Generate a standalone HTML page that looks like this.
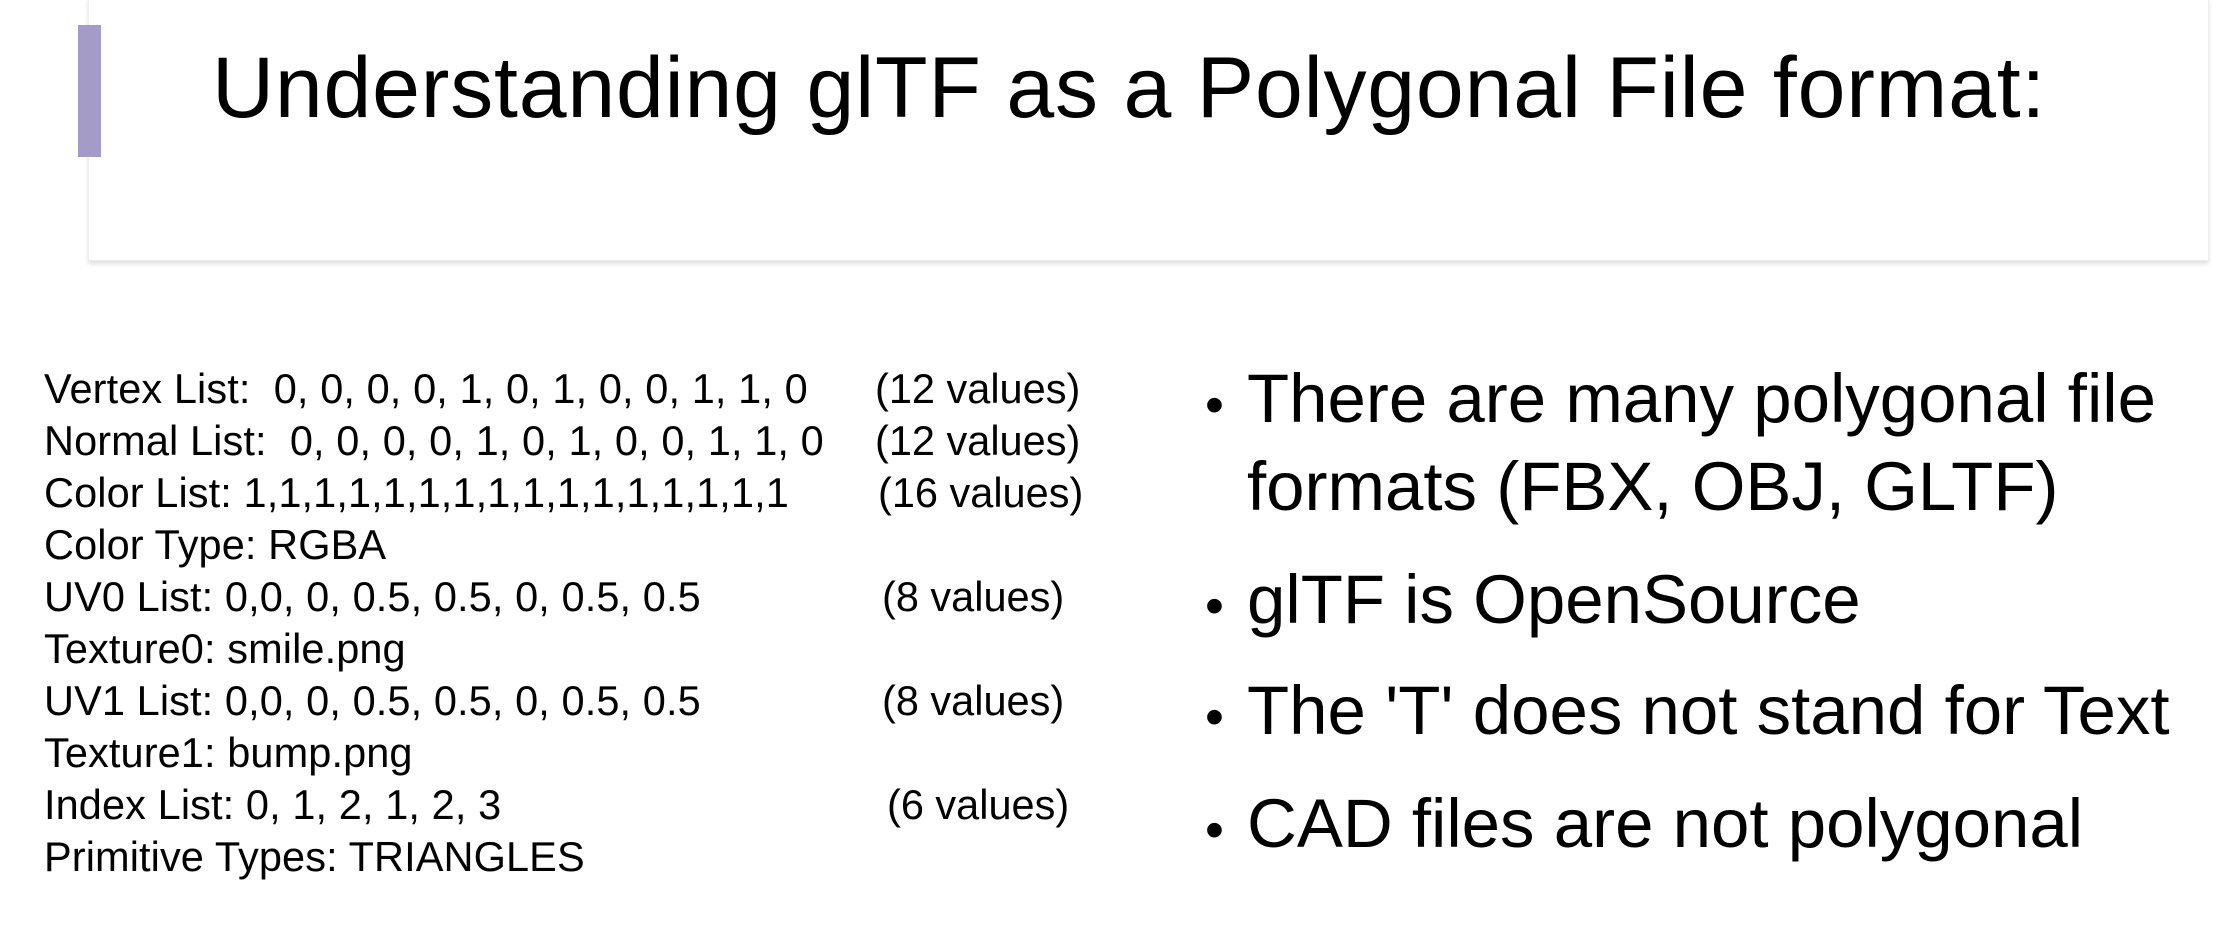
<!DOCTYPE html>
<html><head><meta charset="utf-8"><style>
body{margin:0;width:2221px;height:926px;background:#fff;position:relative;overflow:hidden;font-family:"Liberation Sans",sans-serif;color:#000}
.box{position:absolute;left:88px;top:-2px;width:2119px;height:261px;background:#fff;border:1px solid #eee;box-shadow:0 3px 4px rgba(0,0,0,0.12)}
.bar{position:absolute;left:78px;top:25px;width:23px;height:132px;background:#a59bc9}
.title{position:absolute;left:212px;top:39px;font-size:86px;white-space:nowrap;letter-spacing:0.8px}
.l{position:absolute;left:44px;font-size:41.5px;white-space:nowrap;line-height:1;letter-spacing:0.1px}
.v{position:absolute;font-size:41.5px;white-space:nowrap;line-height:1}
.b{position:absolute;left:1247px;font-size:69px;white-space:nowrap;line-height:1}
.d{position:absolute;left:1205px;font-size:54px;line-height:1}
</style></head><body>
<div class="box"></div>
<div class="bar"></div>
<div class="title">Understanding glTF as a Polygonal File format:</div>

<div class="l" style="top:368px">Vertex List:&nbsp; 0, 0, 0, 0, 1, 0, 1, 0, 0, 1, 1, 0</div>
<div class="v" style="top:368px;left:875px">(12 values)</div>
<div class="l" style="top:420px">Normal List:&nbsp; 0, 0, 0, 0, 1, 0, 1, 0, 0, 1, 1, 0</div>
<div class="v" style="top:420px;left:875px">(12 values)</div>
<div class="l" style="top:472px">Color List: 1,1,1,1,1,1,1,1,1,1,1,1,1,1,1,1</div>
<div class="v" style="top:472px;left:878px">(16 values)</div>
<div class="l" style="top:524px">Color Type: RGBA</div>
<div class="l" style="top:576px">UV0 List: 0,0, 0, 0.5, 0.5, 0, 0.5, 0.5</div>
<div class="v" style="top:576px;left:882px">(8 values)</div>
<div class="l" style="top:628px">Texture0: smile.png</div>
<div class="l" style="top:680px">UV1 List: 0,0, 0, 0.5, 0.5, 0, 0.5, 0.5</div>
<div class="v" style="top:680px;left:882px">(8 values)</div>
<div class="l" style="top:732px">Texture1: bump.png</div>
<div class="l" style="top:784px">Index List: 0, 1, 2, 1, 2, 3</div>
<div class="v" style="top:784px;left:887px">(6 values)</div>
<div class="l" style="top:836px">Primitive Types: TRIANGLES</div>

<div class="d" style="top:378px">•</div>
<div class="b" style="top:364px">There are many polygonal file</div>
<div class="b" style="top:452px">formats (FBX, OBJ, GLTF)</div>
<div class="d" style="top:579px">•</div>
<div class="b" style="top:565px">glTF is OpenSource</div>
<div class="d" style="top:690px">•</div>
<div class="b" style="top:676px">The 'T' does not stand for Text</div>
<div class="d" style="top:803px">•</div>
<div class="b" style="top:789px">CAD files are not polygonal</div>
</body></html>
